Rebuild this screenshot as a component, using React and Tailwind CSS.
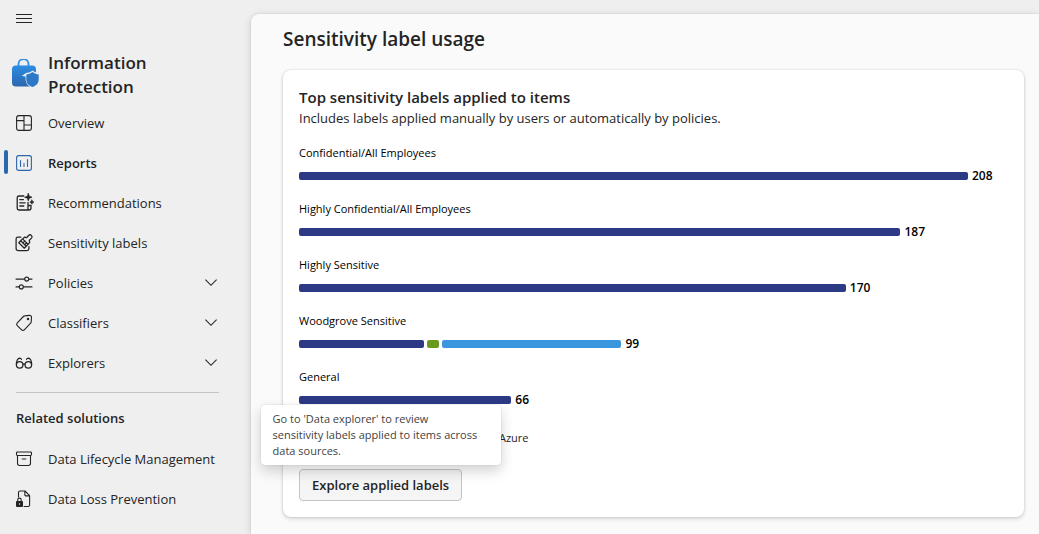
import React from "react";

const iconPaths = {
  overview: (
    <>
      <rect x="2.6" y="2.6" width="14.8" height="14.8" rx="2.4" />
      <path d="M10 2.6v14.8M2.6 7.6H10M10 12h7.4" />
    </>
  ),
  reports: (
    <>
      <rect x="2.6" y="2.6" width="14.8" height="14.8" rx="2.2" />
      <path d="M6.5 7.5v6M10 10.5v3M13.5 6.5v7" />
    </>
  ),
  recommendations: (
    <>
      <path
        d="M9.800 3H5a1.800 1.800 0 0 0-1.800 1.800v10.400A1.800 1.800 0 0 0 5 17h10a2 2 0 0 0 2-2v-2.500h-3V17M14 12.500V9.500"
        strokeWidth="1.3"
      />
      <path d="M5.800 6.600h3.600M5.800 9.800h5.400M5.800 13h4" strokeWidth="1.3" />
      <path
        d="M14.300 .5l1 2.700 2.700 1-2.700 1-1 2.700-1-2.700-2.700-1 2.700-1zM17.900 7l.7 1.500 1.400.6-1.400.6-.7 1.500-.7-1.500-1.400-.6 1.400-.6z"
        fill="currentColor"
        strokeWidth="0.7"
      />
    </>
  ),
  labels: (
    <g strokeWidth="1.25">
      <path d="M6.800 4.200H4A1.900 1.900 0 0 0 2.100 6.100v9.500A1.900 1.900 0 0 0 4 17.500h9a1.900 1.900 0 0 0 1.900-1.900V13.500" />
      <path d="M4.800 9.700l5.500 5.500 1.900-1.900-5.500-5.500zM6.700 7.800l1.900-1.900 5.500 5.500-1.900 1.900M8.600 5.900l1.900-1.700 2 .5 2.100-2.200a1.700 1.700 0 0 1 2.900 2.600l-2.200 2.200.4 2-1.600 2.100M9 9.900l2-2M10.700 11.700l2-2" />
    </g>
  ),
  policies: (
    <>
      <path d="M2 6.1h8.7M14.7 6.1H18M2 13.900h3.300M9.300 13.900H18" />
      <circle cx="12.7" cy="6.1" r="2" />
      <circle cx="7.3" cy="13.9" r="2" />
    </>
  ),
  classifiers: (
    <>
      <path d="M10.700 2.900l4.800-.5A1.800 1.800 0 0 1 17.500 4.300l-.3 4.600a2 2 0 0 1-.6 1.300l-6.300 6.600a1.900 1.900 0 0 1-2.700 0l-4.300-4.200a1.900 1.900 0 0 1 0-2.700l6.100-6.400a2 2 0 0 1 1.300-.6z" />
      <circle cx="14" cy="6" r="0.7" fill="currentColor" />
    </>
  ),
  explorers: (
    <g strokeWidth="1.25">
      <circle cx="5.7" cy="11.8" r="3.3" />
      <circle cx="14.3" cy="11.8" r="3.3" />
      <path d="M9 11h2M2.400 11.500c.1-3 .9-6 3.300-6.300 1 0 1.500.5 1.700 1.200M17.600 11.500c-.1-3-.9-6-3.300-6.300-1 0-1.500.5-1.700 1.200" />
    </g>
  ),
  archive: (
    <>
      <rect x="2.5" y="3" width="15" height="3.5" rx="0.9" />
      <path d="M3.500 6.500v7.800A2.200 2.200 0 0 0 5.700 16.500h8.600a2.200 2.200 0 0 0 2.200-2.200V6.500M8.200 10h3.600" />
    </>
  ),
  loss: (
    <>
      <path d="M4.500 8V3.500A1.500 1.500 0 0 1 6 2h5l4.600 4.700V16a1.500 1.500 0 0 1-1.500 1.500h-4M10.800 2v3.600a1.300 1.300 0 0 0 1.300 1.300h3.500" />
      <path d="M3.700 12.500v-1.600a1.700 1.700 0 0 1 3.500 0v1.600" />
      <path
        d="M3 12h5a1 1 0 0 1 1 1V17a1 1 0 0 1-1 1H3a1 1 0 0 1-1-1v-4a1 1 0 0 1 1-1z"
        fill="currentColor"
        stroke="none"
      />
      <circle cx="5.5" cy="15" r="0.7" fill="#efefef" stroke="none" />
    </>
  ),
};

function Icon({ name, className = "" }) {
  return (
    <svg
      viewBox="0 0 20 20"
      className={`size-5 shrink-0 ${className}`}
      fill="none"
      stroke="currentColor"
      strokeWidth="1.1"
      strokeLinecap="round"
      strokeLinejoin="round"
      aria-hidden="true"
    >
      {iconPaths[name]}
    </svg>
  );
}

function Chevron() {
  return (
    <svg viewBox="0 0 12 8" className="h-2 w-3 shrink-0" fill="none" stroke="currentColor" strokeWidth="1.1" aria-hidden="true">
      <path d="M.4 .7L6 6.300l5.600-5.600" />
    </svg>
  );
}

function Logo() {
  return (
    <svg viewBox="0 2 28 32" className="h-8 w-7 shrink-0" aria-hidden="true">
      <defs>
        <linearGradient id="bag" x1="0" y1="0" x2="0" y2="1">
          <stop offset="0" stopColor="#2b8de4" />
          <stop offset="1" stopColor="#2d66ad" />
        </linearGradient>
      </defs>
      <path d="M7.500 10V7a5 5 0 0 1 10 0V10" fill="none" stroke="#2f8fe6" strokeWidth="1.8" />
      <rect x="1" y="8.5" width="24" height="21" rx="3.8" fill="url(#bag)" />
      <path
        d="M21.500 13.600c-2.300 2-4.500 2.300-6.500 2.400l-4.200 3 3.800.6c-.2 5 .8 8.800 7 11.400 6-2.200 7.300-6.500 7-14.600-2.500-.3-5-1-7.100-2.800z"
        fill="#efefef"
      />
      <path
        d="M21.500 15c-2 1.600-4.100 2.400-6.200 2.500v5c0 3.700 2.500 6.200 6.200 7.600 3.700-1.400 6.200-3.900 6.200-7.600v-5c-2.100-.1-4.200-.9-6.200-2.500z"
        fill="#2c77c6"
      />
    </svg>
  );
}

function NavItem({ icon, label, active, expandable }) {
  const shared = "relative flex h-10 w-full items-center gap-[14px] pr-[34px] pl-[14px] text-left";
  const content = (
    <>
      {active && <span className="absolute top-[7px] left-1 h-6 w-1 rounded-full bg-[#2b67ad]" />}
      <Icon name={icon} className={active ? "text-[#2b67ad]" : ""} />
      <span className={`grow pt-0.5 whitespace-nowrap ${active ? "font-semibold" : ""}`}>{label}</span>
      {expandable && <Chevron />}
    </>
  );
  return (
    <li>
      {expandable ? (
        <button type="button" aria-expanded="false" className={shared}>
          {content}
        </button>
      ) : (
        <a href="#" aria-current={active ? "page" : undefined} className={shared}>
          {content}
        </a>
      )}
    </li>
  );
}

function Sidebar() {
  return (
    <nav className="w-[251px] shrink-0 text-[13px]" aria-label="Information Protection">
      <button type="button" aria-label="Toggle navigation" className="flex h-9 items-center px-4">
        <svg viewBox="0 0 16 10" className="h-[10px] w-4" stroke="currentColor" strokeWidth="1" aria-hidden="true">
          <path d="M0 1.500h16M0 5.500h16M0 9.500h16" />
        </svg>
      </button>
      <div className="mt-[15px] mb-1 flex items-center gap-[9px] pl-[11px]">
        <Logo />
        <div className="w-28 text-[17px] leading-6 font-semibold">Information Protection</div>
      </div>
      <ul>
        <NavItem icon="overview" label="Overview" />
        <NavItem icon="reports" label="Reports" active />
        <NavItem icon="recommendations" label="Recommendations" />
        <NavItem icon="labels" label="Sensitivity labels" />
        <NavItem icon="policies" label="Policies" expandable />
        <NavItem icon="classifiers" label="Classifiers" expandable />
        <NavItem icon="explorers" label="Explorers" expandable />
      </ul>
      <hr className="mt-[9px] mr-8 ml-4 border-[#c4c4c4]" />
      <h2 className="mt-[5px] pl-4 leading-10 font-semibold">Related solutions</h2>
      <ul className="mt-px">
        <NavItem icon="archive" label="Data Lifecycle Management" />
        <NavItem icon="loss" label="Data Loss Prevention" />
      </ul>
    </nav>
  );
}

const NAVY = "bg-[#2c3a86]";
const GREEN = "bg-[#6a9a20]";
const BLUE = "bg-[#3a96dd]";

const rows = [
  { label: "Confidential/All Employees", parts: [[208, NAVY]] },
  { label: "Highly Confidential/All Employees", parts: [[187, NAVY]] },
  { label: "Highly Sensitive", parts: [[170, NAVY]] },
  { label: "Woodgrove Sensitive", parts: [[39, NAVY], [4, GREEN], [56, BLUE]] },
  { label: "General", parts: [[66, NAVY]] },
];

const MAX = 208;

function BarRow({ label, parts }) {
  const total = parts.reduce((sum, [value]) => sum + value, 0);
  const extra = (parts.length - 1) * 2;
  return (
    <li className="flex flex-col gap-[7px] text-[11px] leading-4 text-black">
      <span>{label}</span>
      <div className="flex items-center gap-1">
        <div className="flex gap-[3px]" style={{ width: `calc((100% - 40px) * ${total / MAX} + ${extra}px)` }}>
          {parts.map(([value, color]) => (
            <span key={color} className={`h-2 basis-0 rounded-xs ${color}`} style={{ flexGrow: value }} />
          ))}
        </div>
        <span className="text-[12px] font-semibold">{total}</span>
      </div>
    </li>
  );
}

export default function App() {
  return (
    <div className="flex min-h-screen bg-[#efefef] font-['Segoe_UI','Open_Sans','Noto_Sans',sans-serif] text-[#242424]">
      <Sidebar />
      <main className="mt-[14px] min-w-0 grow rounded-tl-lg bg-[#fafafa] pt-[11px] pr-[15px] pb-4 pl-8 shadow-[0_0_2px_rgba(0,0,0,0.12),0_2px_8px_rgba(0,0,0,0.14)]">
        <h1 className="text-[19px] leading-7 font-semibold">Sensitivity label usage</h1>
        <section className="mt-[17px] rounded-lg bg-white p-4 shadow-[0_0_2px_rgba(0,0,0,0.18),0_2px_4px_rgba(0,0,0,0.14)]">
          <h2 className="text-[15px] leading-[22px] font-semibold">Top sensitivity labels applied to items</h2>
          <p className="text-[13px] leading-5">Includes labels applied manually by users or automatically by policies.</p>
          <ul className="mt-[17px] flex flex-col gap-[17px]">
            {rows.map((row) => (
              <BarRow key={row.label} {...row} />
            ))}
          </ul>
          <div className="mt-[22px] pl-[200px] text-[11px] leading-4">Azure</div>
          <div className="relative mt-[23px] w-fit">
            <button
              type="button"
              aria-describedby="explore-tip"
              className="h-8 rounded border border-[#c4c4c4] bg-[#f5f5f5] px-3 pt-0.5 text-[13px] font-semibold whitespace-nowrap"
            >
              Explore applied labels
            </button>
            <div
              id="explore-tip"
              role="tooltip"
              className="absolute bottom-full left-1/2 mb-1 w-60 -translate-x-1/2 rounded bg-white px-3 py-1.5 text-[11px] leading-4 text-[#424242] shadow-[0_0_2px_rgba(0,0,0,0.14),0_6px_14px_rgba(0,0,0,0.18)]"
            >
              Go to 'Data explorer' to review
              <br />
              sensitivity labels applied to items across data sources.
            </div>
          </div>
        </section>
      </main>
    </div>
  );
}
